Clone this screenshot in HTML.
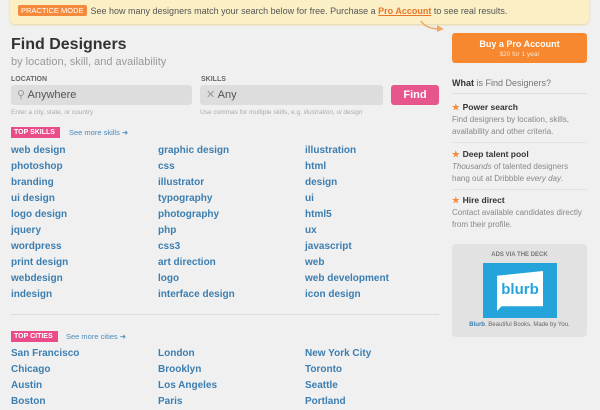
<!DOCTYPE html>
<html><head><meta charset="utf-8"><style>
*{margin:0;padding:0;box-sizing:border-box}
body{width:600px;height:409px;overflow:hidden;background:#f0f0f0;font-family:"Liberation Sans",Arial,sans-serif;position:relative;color:#333}
.a{position:absolute}
.banner{left:10px;top:-2px;width:579px;height:26px;background:#fbefc6;border-radius:0 0 5px 5px;box-shadow:0 1px 2px #e6d49a;font-size:9px;color:#555;line-height:26px;padding-left:8px}
.pm{display:inline-block;background:#f58a3c;color:#fff;font-size:7.5px;line-height:11px;padding:0 3px;border-radius:2px;margin-right:4px;vertical-align:1px}
.banner u{color:#e8752a;font-weight:bold;text-decoration:underline}
h1{font-size:16px;color:#333;left:11px;top:36px}
.sub{left:11px;top:56px;font-size:11px;color:#999}
.lab{font-size:7px;color:#666;font-weight:bold;top:76px}
.inp{top:85px;height:20px;background:#ddd;border-radius:3px;font-size:11px;color:#555;line-height:20px;padding-left:6px}
.hint{top:109px;font-size:6.5px;color:#aaa}
.find{left:391px;top:85px;width:48px;height:20px;background:#e7558d;border-radius:3px;color:#fff;font-weight:bold;font-size:11px;text-align:center;line-height:20px}
.tag{background:#ea4c89;color:#fff;font-size:7px;font-weight:bold;height:11px;line-height:11px;padding:0 5px 0 3px}
.more{font-size:7.5px;color:#4a8bbb}
.l{font-size:10px;font-weight:bold;color:#3c7eb0;line-height:16px}
.hr{left:11px;width:428px;height:1px;background:#ddd;top:314px}
.buy{left:452px;top:33px;width:135px;height:30px;background:#f7882f;border-radius:3px;color:#fff;text-align:center;font-size:9px;font-weight:bold;padding-top:6px}
.buy span{display:block;font-size:6.5px;font-weight:normal;color:#fde2c6;margin-top:2px}
.side{left:452px;width:135px;font-size:8px;color:#888;line-height:12px}
.side b.h{color:#333;font-size:8.5px;display:block;margin-bottom:1px}
.star{color:#f58a3c;margin-right:3px}
</style></head><body>
<div class="a banner"><span class="pm">PRACTICE MODE</span>See how many designers match your search below for free. Purchase a <u>Pro Account</u> to see real results.</div>
<svg class="a" style="left:418px;top:20px" width="30" height="16"><path d="M3 1 Q8 9 22 9" stroke="#f0a86a" stroke-width="1.5" fill="none"/><path d="M19 5 L26 9 L19 12 Z" fill="#f0a86a"/></svg>
<h1 class="a">Find Designers</h1>
<div class="a sub">by location, skill, and availability</div>
<div class="a lab" style="left:11px">LOCATION</div>
<div class="a lab" style="left:201px">SKILLS</div>
<div class="a inp" style="left:11px;width:181px"><span style="color:#999">⚲</span> Anywhere</div>
<div class="a inp" style="left:200px;width:183px"><span style="color:#999">✕</span> Any</div>
<div class="a find">Find</div>
<div class="a hint" style="left:11px">Enter a city, state, or country</div>
<div class="a hint" style="left:200px">Use commas for multiple skills, e.g. <i>illustration, ui design</i></div>
<div class="a tag" style="left:11px;top:127px">TOP SKILLS</div>
<div class="a more" style="left:69px;top:128px">See more skills ➜</div>
<div class="a l" style="left:11px;top:143px">web design<br>photoshop<br>branding<br>ui design<br>logo design<br>jquery<br>wordpress<br>print design<br>webdesign<br>indesign</div>
<div class="a l" style="left:158px;top:143px">graphic design<br>css<br>illustrator<br>typography<br>photography<br>php<br>css3<br>art direction<br>logo<br>interface design</div>
<div class="a l" style="left:305px;top:143px">illustration<br>html<br>design<br>ui<br>html5<br>ux<br>javascript<br>web<br>web development<br>icon design</div>
<div class="a hr"></div>
<div class="a tag" style="left:11px;top:331px">TOP CITIES</div>
<div class="a more" style="left:66px;top:332px">See more cities ➜</div>
<div class="a l" style="left:11px;top:346px">San Francisco<br>Chicago<br>Austin<br>Boston</div>
<div class="a l" style="left:158px;top:346px">London<br>Brooklyn<br>Los Angeles<br>Paris</div>
<div class="a l" style="left:305px;top:346px">New York City<br>Toronto<br>Seattle<br>Portland</div>
<div class="a buy">Buy a Pro Account<span>$20 for 1 year</span></div>
<div class="a side" style="top:77px;font-size:9px;color:#777;border-bottom:1px solid #ddd;padding-bottom:4px;width:135px"><b style="color:#333">What</b> is Find Designers?</div>
<div class="a side" style="top:101px;border-bottom:1px solid #e2e2e2;padding-bottom:4px"><b class="h"><span class="star">★</span>Power search</b>Find designers by location, skills, availability and other criteria.</div>
<div class="a side" style="top:148px;border-bottom:1px solid #e2e2e2;padding-bottom:4px"><b class="h"><span class="star">★</span>Deep talent pool</b><i>Thousands</i> of talented designers hang out at Dribbble <i>every day</i>.</div>
<div class="a side" style="top:194px"><b class="h"><span class="star">★</span>Hire direct</b>Contact available candidates directly from their profile.</div>
<div class="a" style="left:452px;top:244px;width:135px;height:93px;background:#e2e2e2;border-radius:4px">
<div style="text-align:center;font-size:6px;font-weight:bold;color:#777;margin-top:8px">ADS VIA THE DECK</div>
<div style="position:absolute;left:31px;top:19px;width:74px;height:55px;background:#25a4dc">
<div style="position:absolute;left:14px;top:8px;width:46px;height:40px;background:#fff;clip-path:polygon(0 12%,100% 0,100% 88%,10% 88%,0 100%)"></div>
<div style="position:absolute;left:0;width:74px;top:18px;text-align:center;color:#25a4dc;font-weight:bold;font-size:15px">blurb</div></div>
<div style="position:absolute;top:78px;width:135px;text-align:center;font-size:6px;color:#666"><b style="color:#3c7eb0">Blurb</b>. Beautiful Books. Made by You.</div>
</div>
</body></html>
